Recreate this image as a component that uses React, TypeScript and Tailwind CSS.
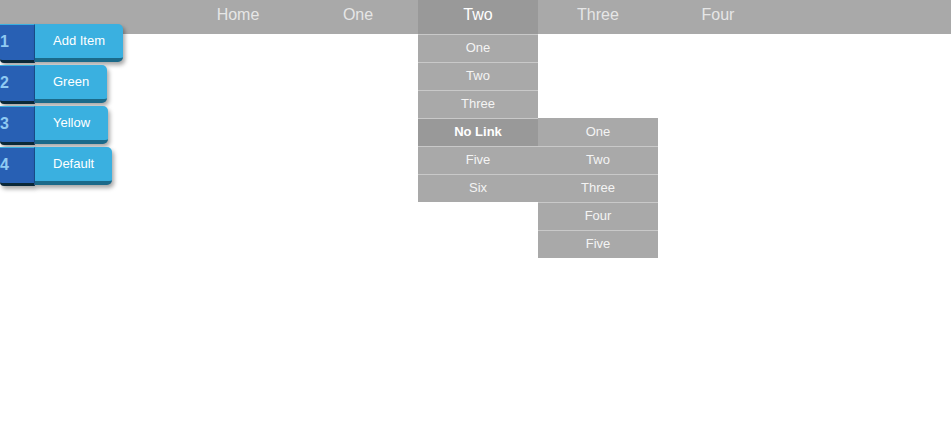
const navItems = ["Home", "One", "Two", "Three", "Four"];
const dropItems = ["One", "Two", "Three", "No Link", "Five", "Six"];
const subItems = ["One", "Two", "Three", "Four", "Five"];
const buttons = [
  { n: "1", label: "Add Item" },
  { n: "2", label: "Green" },
  { n: "3", label: "Yellow" },
  { n: "4", label: "Default" },
];

export default function App() {
  return (
    <div className="relative h-[429px] w-full bg-white font-['Liberation_Sans',Arial,sans-serif]">
      <nav className="flex h-[34px] justify-center bg-[#a9a9a9] pl-[5px]">
        {navItems.map((item) => (
          <div key={item} className="relative w-[120px]">
            <div
              className={
                item === "Two"
                  ? "flex h-[34px] items-center justify-center bg-[#999999] pb-[5px] text-[16px] text-white"
                  : "flex h-[34px] items-center justify-center pb-[5px] text-[16px] text-[#e6e6e6]"
              }
            >
              {item}
            </div>
            {item === "Two" && (
              <ul className="absolute left-0 top-[34px] w-[120px] bg-[#a9a9a9]">
                {dropItems.map((d) => (
                  <li key={d} className="relative">
                    <div
                      className={
                        d === "No Link"
                          ? "flex h-[28px] items-center justify-center border-t border-[#c9c9c9] bg-[#999999] pb-[2px] text-[13px] font-bold text-white"
                          : "flex h-[28px] items-center justify-center border-t border-[#c9c9c9] pb-[2px] text-[13px] text-[#f4f4f4]"
                      }
                    >
                      {d}
                    </div>
                    {d === "No Link" && (
                      <ul className="absolute left-[120px] top-0 w-[120px] bg-[#a9a9a9]">
                        {subItems.map((s, i) => (
                          <li
                            key={s}
                            className={
                              i === 0
                                ? "flex h-[28px] items-center justify-center pb-[1px] text-[13px] text-[#f4f4f4]"
                                : "flex h-[28px] items-center justify-center border-t border-[#c9c9c9] pb-[2px] text-[13px] text-[#f4f4f4]"
                            }
                          >
                            {s}
                          </li>
                        ))}
                      </ul>
                    )}
                  </li>
                ))}
              </ul>
            )}
          </div>
        ))}
      </nav>

      <div className="absolute left-0 top-[24px] flex flex-col gap-[2px]">
        {buttons.map((b) => (
          <div key={b.n} className="flex items-start">
            <div className="flex h-[39px] w-[35px] items-center rounded-bl-[4px] border-r border-t border-b-[3px] border-r-[#1a4f8a] border-t-[#3ab0e0] border-b-[#0b2838] bg-[#2860b4] pb-[2px] text-[16px] font-bold text-[#8fcaf2] shadow-[2px_3px_4px_rgba(0,0,0,0.35)]">
              {b.n}
            </div>
            <div className="flex h-[38px] items-center rounded-r-[5px] border-b-4 border-[#1b6a8a] bg-[#3ab0e0] px-[18px] pb-[1px] text-[13px] text-white shadow-[2px_3px_4px_rgba(0,0,0,0.35)]">
              {b.label}
            </div>
          </div>
        ))}
      </div>
    </div>
  );
}
